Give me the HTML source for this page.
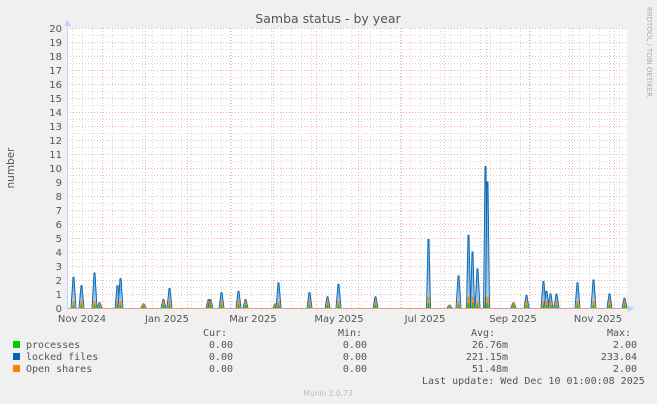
<!DOCTYPE html>
<html><head><meta charset="utf-8"><style>
html,body{margin:0;padding:0;background:#f0f0f0;}
body{width:657px;height:404px;overflow:hidden;position:relative;font-family:"DejaVu Sans","Liberation Sans",sans-serif;}
.t{position:absolute;white-space:pre;}
.m{font-family:"DejaVu Sans Mono","Liberation Mono",monospace;font-size:10px;color:#555;line-height:12px;}
</style></head><body>
<svg id="g" width="657" height="404" style="position:absolute;left:0;top:0" xmlns="http://www.w3.org/2000/svg">
<defs><linearGradient id="bl" x1="0" y1="0" x2="0" y2="1"><stop offset="0" stop-color="#5f9fd8"/><stop offset="1" stop-color="#b6d4ee"/></linearGradient></defs>
<rect x="67" y="28" width="560" height="280" fill="#fff"/>
<g id="grid"></g>
<g id="data"></g>
<line x1="67" y1="308.5" x2="630" y2="308.5" stroke="#e8a080" stroke-width="1"/>
<line x1="67.5" y1="22" x2="67.5" y2="309" stroke="#c8d0f8" stroke-width="1"/>
<polygon points="64,26 71,26 67.5,20" fill="#c8d0f8"/>
<polygon points="628,305 628,312 634,308.5" fill="#c8d0f8"/>
<text x="328" y="23" text-anchor="middle" font-size="12.5" fill="#555" font-family="DejaVu Sans,sans-serif">Samba status - by year</text>
<text transform="translate(14,168) rotate(-90)" text-anchor="middle" font-size="10.5" fill="#555" font-family="DejaVu Sans,sans-serif">number</text>
<text transform="translate(647,52) rotate(90)" text-anchor="middle" font-size="7" fill="#aaa" font-family="DejaVu Sans,sans-serif">RRDTOOL / TOBI OETIKER</text>
<g id="yl" font-size="10" fill="#555" text-anchor="end" font-family="DejaVu Sans,sans-serif"></g>
<g font-size="10" fill="#555" text-anchor="middle" font-family="DejaVu Sans,sans-serif">
<text x="82" y="322">Nov 2024</text><text x="167" y="322">Jan 2025</text><text x="253" y="322">Mar 2025</text>
<text x="339" y="322">May 2025</text><text x="425" y="322">Jul 2025</text><text x="513" y="322">Sep 2025</text><text x="598" y="322">Nov 2025</text>
</g>
<rect x="13" y="341" width="7" height="7" fill="#00cc00"/>
<rect x="13" y="353" width="7" height="7" fill="#0066b3"/>
<rect x="13" y="365" width="7" height="7" fill="#ff8000"/>
<text x="328" y="396" text-anchor="middle" font-size="7.5" fill="#bbb" font-family="DejaVu Sans,sans-serif">Munin 2.0.73</text>
</svg>
<div class="t m" style="left:203px;top:328px">Cur:</div>
<div class="t m" style="left:338px;top:328px">Min:</div>
<div class="t m" style="left:471px;top:328px">Avg:</div>
<div class="t m" style="left:607px;top:328px">Max:</div>
<div class="t m" style="left:26px;top:340px">processes</div>
<div class="t m" style="left:26px;top:352px">locked files</div>
<div class="t m" style="left:26px;top:364px">Open shares</div>
<div class="t m" style="right:424px;top:340px;text-align:right">0.00
0.00
0.00</div>
<div class="t m" style="right:290px;top:340px;text-align:right">0.00
0.00
0.00</div>
<div class="t m" style="right:149px;top:340px;text-align:right">26.76m
221.15m
51.48m</div>
<div class="t m" style="right:20px;top:340px;text-align:right">2.00
233.04
2.00</div>
<div class="t m" style="left:422px;top:376px">Last update: Wed Dec 10 01:00:08 2025</div>
<script>
var NS="http://www.w3.org/2000/svg";
function el(p,n,a){var e=document.createElementNS(NS,n);for(var k in a)e.setAttribute(k,a[k]);p.appendChild(e);return e;}
var g=document.getElementById('grid'),yl=document.getElementById('yl'),d=document.getElementById('data');
for(var i=0;i<=40;i++){var y=308-i*7+0.5;if(i%2)el(g,'line',{x1:67,x2:627,y1:y,y2:y,stroke:'#d8d8d8','stroke-dasharray':'1,2'});}
for(var x=72;x<627;x+=9.95){el(g,'line',{x1:Math.round(x)+.5,x2:Math.round(x)+.5,y1:28,y2:308,stroke:'#d8d8d8','stroke-dasharray':'1,2'});}
for(var i=0;i<13;i++){var x=Math.round(102+i*42.7)+.5;el(g,'line',{x1:x,x2:x,y1:28,y2:308,stroke:'#f2b0b0','stroke-dasharray':'1,2'});}
for(var i=0;i<=20;i++){var y=308-i*14+0.5;el(g,'line',{x1:67,x2:627,y1:y,y2:y,stroke:'#f2b0b0','stroke-dasharray':'1,2'});
 var t=el(yl,'text',{x:62,y:y+3.5});t.textContent=i;}
var s=[[73,2.2],[81,1.6],[94,2.5],[99,0.4],[117,1.6],[120,2.1],[143,0.3],[163,0.6],[169,1.4],[208,0.6],[210,0.6],[221,1.1],[238,1.2],[245,0.6],[275,0.3],[278,1.8],[309,1.1],[327,0.8],[338,1.7],[375,0.8],[428,4.9],[449,0.2],[458,2.3],[468,5.2],[472,4.0],[477,2.8],[485,10.1],[487,9.0],[513,0.4],[526,0.9],[543,1.9],[546,1.2],[550,1.0],[556,1.0],[577,1.8],[593,2.0],[609,1.0],[624,0.7]];
s.forEach(function(p){var x=p[0],v=p[1],top=308-v*14,w=v>3?1.5:2;
 el(d,'polygon',{points:(x-w)+',308 '+x+','+top+' '+(x+1)+','+top+' '+(x+w+1)+',308',fill:'url(#bl)'});
 el(d,'polyline',{points:(x-w)+',308 '+x+','+top+' '+(x+1)+','+top+' '+(x+w+1)+',308',fill:'none',stroke:'#0066b3','stroke-width':0.9});
 var o=Math.min(v,v>3?0.8:0.5)*14;
 el(d,'polygon',{points:(x-1)+',308 '+(x-0.5)+','+(308-o)+' '+(x+1.5)+','+(308-o)+' '+(x+2)+',308',fill:'#ff8000',opacity:.85});
 el(d,'polygon',{points:(x-0.5)+',308 '+(x)+','+(308-o*0.45)+' '+(x+1)+','+(308-o*0.45)+' '+(x+1.5)+',308',fill:'#00cc00'});
});
</script>
</body></html>
